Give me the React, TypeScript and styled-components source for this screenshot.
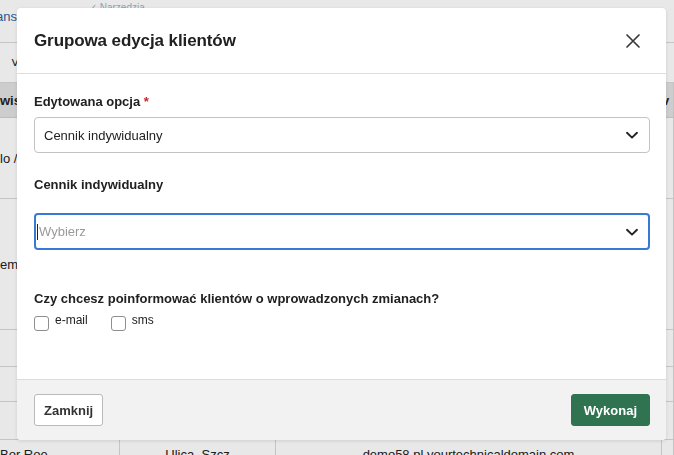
import React from "react";
import styled, { createGlobalStyle } from "styled-components";

const Global = createGlobalStyle`
  html, body { margin: 0; padding: 0; }
  body { font-family: "Liberation Sans", Arial, sans-serif; background: #fff; overflow: hidden; }
  * { box-sizing: border-box; }
`;

/* ---------- background page ---------- */
const Page = styled.div`
  width: 674px;
  height: 455px;
  overflow: hidden;
  display: flex;
  flex-direction: column;
  background: #fff;
  color: #222;
  font-size: 13px;
`;
const TopBar = styled.div`
  height: 43px;
  flex: none;
  display: flex;
  align-items: flex-start;
  gap: 72px;
  padding-top: 9px;
  border-bottom: 1px solid #d8d8d8;
`;
const TopLink = styled.span<{ $faint?: boolean }>`
  color: #2d5f9e;
  font-size: ${(p) => (p.$faint ? "10px" : "13px")};
  opacity: ${(p) => (p.$faint ? 0.5 : 1)};
  margin-left: ${(p) => (p.$faint ? "0" : "-4px")};
  margin-top: ${(p) => (p.$faint ? "-7px" : "0")};
`;
const Toolbar = styled.div`
  height: 40px;
  flex: none;
  display: flex;
  align-items: center;
  padding-left: 11px;
  font-size: 14px;
  border-bottom: 1px solid #d8d8d8;
`;
const Table = styled.div`
  flex: none;
  display: flex;
  flex-direction: column;
`;
const HeadRow = styled.div`
  height: 35px;
  flex: none;
  display: grid;
  grid-template-columns: 120px 156px 386px 12px;
  align-items: center;
  background: #e2e2e2;
  font-weight: bold;
  border-bottom: 1px solid #d0d0d0;
`;
const Row = styled.div<{ $h: number }>`
  height: ${(p) => p.$h}px;
  flex: none;
  display: grid;
  grid-template-columns: 120px 156px 386px 12px;
  align-items: center;
  border-bottom: 1px solid #d8d8d8;
`;
const Cell = styled.div<{ $center?: boolean }>`
  height: 100%;
  display: flex;
  align-items: center;
  justify-content: ${(p) => (p.$center ? "center" : "flex-start")};
  border-right: 1px solid #d8d8d8;
  white-space: nowrap;
  overflow: hidden;
`;

/* ---------- modal ---------- */
const Backdrop = styled.div`
  position: fixed;
  inset: 0;
  background: rgba(0, 0, 0, 0.09);
  padding: 8px 0 0 17px;
`;
const Modal = styled.div`
  width: 649px;
  height: 432px;
  background: #fff;
  border-radius: 4px;
  box-shadow: 0 1px 4px rgba(0, 0, 0, 0.12);
  display: flex;
  flex-direction: column;
  color: #212121;
`;
const Header = styled.div`
  height: 66px;
  flex: none;
  display: flex;
  align-items: center;
  justify-content: space-between;
  padding: 0 25px 0 17px;
  border-bottom: 1px solid #dedede;
`;
const Title = styled.h2`
  margin: 0;
  font-size: 17px;
  font-weight: bold;
  letter-spacing: -0.1px;
`;
const CloseBtn = styled.button`
  border: 0;
  background: none;
  padding: 0;
  width: 16px;
  height: 16px;
  display: flex;
  cursor: pointer;
`;
const Body = styled.div`
  flex: 1;
  padding: 20px 16px 0 17px;
  display: flex;
  flex-direction: column;
`;
const Label = styled.div<{ $gap: number; $top?: number }>`
  font-size: 13px;
  font-weight: bold;
  line-height: 16px;
  margin-top: ${(p) => p.$top ?? 0}px;
  margin-bottom: ${(p) => p.$gap}px;
`;
const Req = styled.span`
  color: #c62828;
`;
const SelectBox = styled.div<{ $focus?: boolean }>`
  height: ${(p) => (p.$focus ? 37 : 36)}px;
  border: ${(p) => (p.$focus ? "2px solid #3a78d6" : "1px solid #c3c3c3")};
  border-radius: 4px;
  display: flex;
  align-items: center;
  padding: ${(p) => (p.$focus ? "0 9px 0 1px" : "0 10px 0 9px")};
  font-size: 13px;
`;
const SelectText = styled.span`
  flex: 1;
  color: #222;
`;
const Placeholder = styled.span`
  flex: 1;
  color: #9a9a9a;
  display: flex;
  align-items: center;
`;
const Caret = styled.span`
  width: 1px;
  height: 16px;
  background: #222;
  margin-right: 1px;
`;
const Question = styled.div`
  margin-top: 41px;
  font-size: 13px;
  font-weight: bold;
  line-height: 16px;
`;
const Checks = styled.div`
  margin-top: 6px;
  display: flex;
  gap: 23px;
`;
const CheckLabel = styled.label`
  display: flex;
  align-items: flex-start;
  gap: 6px;
  font-size: 12px;
  color: #222;
`;
const Box = styled.span`
  width: 15px;
  height: 15px;
  margin-top: 3px;
  border: 1px solid #8e8e8e;
  border-radius: 3px;
  background: #fff;
`;
const Footer = styled.div`
  height: 61px;
  flex: none;
  background: #f2f2f2;
  border-top: 1px solid #dcdcdc;
  border-radius: 0 0 4px 4px;
  display: flex;
  align-items: center;
  justify-content: space-between;
  padding: 0 16px 0 17px;
`;
const Button = styled.button<{ $primary?: boolean }>`
  height: 32px;
  padding: 0 ${(p) => (p.$primary ? 12 : 9)}px;
  border-radius: 3px;
  font-family: inherit;
  font-size: 13px;
  font-weight: bold;
  border: 1px solid ${(p) => (p.$primary ? "#2f7350" : "#b9b9b9")};
  background: ${(p) => (p.$primary ? "#2f7350" : "#fff")};
  color: ${(p) => (p.$primary ? "#fff" : "#333")};
  cursor: pointer;
`;

const Chevron = () => (
  <svg width="14" height="14" viewBox="0 0 14 14" fill="none">
    <path d="M2 4.8 L7 9.6 L12 4.8" stroke="#222" strokeWidth="1.9" strokeLinecap="round" strokeLinejoin="round" />
  </svg>
);

export default function App() {
  return (
    <>
      <Global />
      <Page>
        <TopBar>
          <TopLink>ans</TopLink>
          <TopLink $faint>✓ Narzędzia</TopLink>
        </TopBar>
        <Toolbar>˅</Toolbar>
        <Table>
          <HeadRow>
            <Cell>wisk</Cell>
            <Cell />
            <Cell />
            <Cell>v</Cell>
          </HeadRow>
          <Row $h={81}>
            <Cell>lo /</Cell>
            <Cell />
            <Cell />
            <Cell />
          </Row>
          <Row $h={131}>
            <Cell>em</Cell>
            <Cell />
            <Cell />
            <Cell />
          </Row>
          <Row $h={37}>
            <Cell />
            <Cell />
            <Cell />
            <Cell />
          </Row>
          <Row $h={35}>
            <Cell />
            <Cell />
            <Cell />
            <Cell />
          </Row>
          <Row $h={38}>
            <Cell />
            <Cell />
            <Cell />
            <Cell />
          </Row>
          <Row $h={30}>
            <Cell>Bor Roe</Cell>
            <Cell $center>Ulica, Szcz</Cell>
            <Cell $center>demo58.pl.yourtechnicaldomain.com</Cell>
            <Cell />
          </Row>
        </Table>
      </Page>
      <Backdrop>
        <Modal>
          <Header>
            <Title>Grupowa edycja klientów</Title>
            <CloseBtn aria-label="Zamknij">
              <svg width="16" height="16" viewBox="0 0 16 16">
                <path d="M2 2 L14 14 M14 2 L2 14" stroke="#3a3a3a" strokeWidth="1.7" strokeLinecap="round" />
              </svg>
            </CloseBtn>
          </Header>
          <Body>
            <Label $gap={7}>
              Edytowana opcja <Req>*</Req>
            </Label>
            <SelectBox>
              <SelectText>Cennik indywidualny</SelectText>
              <Chevron />
            </SelectBox>
            <Label $top={24} $gap={20}>Cennik indywidualny</Label>
            <SelectBox $focus>
              <Placeholder>
                <Caret />
                Wybierz
              </Placeholder>
              <Chevron />
            </SelectBox>
            <Question>Czy chcesz poinformować klientów o wprowadzonych zmianach?</Question>
            <Checks>
              <CheckLabel>
                <Box />
                e-mail
              </CheckLabel>
              <CheckLabel>
                <Box />
                sms
              </CheckLabel>
            </Checks>
          </Body>
          <Footer>
            <Button>Zamknij</Button>
            <Button $primary>Wykonaj</Button>
          </Footer>
        </Modal>
      </Backdrop>
    </>
  );
}
